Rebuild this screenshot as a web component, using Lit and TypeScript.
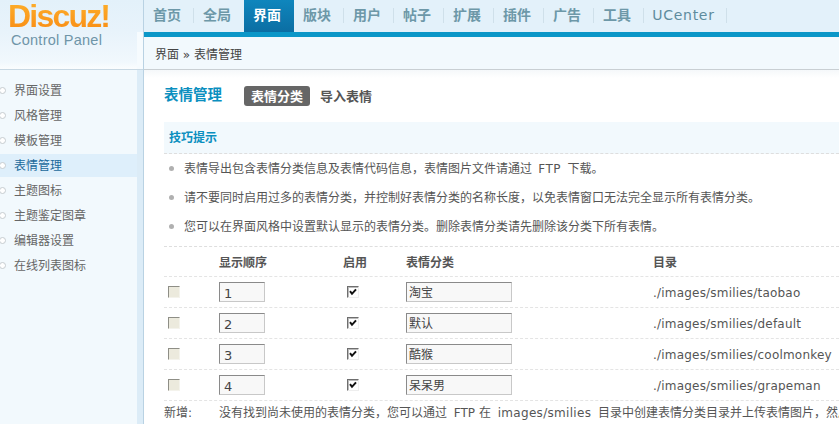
import { LitElement, html, css } from "lit";
import { customElement } from "lit/decorators.js";

const TABS = ["首页", "全局", "界面", "版块", "用户", "帖子", "扩展", "插件", "广告", "工具", "UCenter"];
const NAV = ["界面设置", "风格管理", "模板管理", "表情管理", "主题图标", "主题鉴定图章", "编辑器设置", "在线列表图标"];
const ROWS = [
  ["1", "淘宝", "./images/smilies/taobao"],
  ["2", "默认", "./images/smilies/default"],
  ["3", "酷猴", "./images/smilies/coolmonkey"],
  ["4", "呆呆男", "./images/smilies/grapeman"],
];
const TIPS = [
  html`表情导出包含表情分类信息及表情代码信息，表情图片文件请通过 <span class="lat">FTP</span> 下载。`,
  html`请不要同时启用过多的表情分类，并控制好表情分类的名称长度，以免表情窗口无法完全显示所有表情分类。`,
  html`您可以在界面风格中设置默认显示的表情分类。删除表情分类请先删除该分类下所有表情。`,
];

@customElement("app-root")
export class AppRoot extends LitElement {
  static styles = css`
    :host {
      display: grid;
      grid-template-columns: 144px 695px;
      width: 839px;
      height: 424px;
      overflow: hidden;
      background: #fff;
      font: 12px "DejaVu Sans", "Noto Sans CJK SC", sans-serif;
      color: #666;
    }
    .lat { letter-spacing: .5px; }
    .left { display: flex; flex-direction: column; background: #f2f9fd; border-right: 1px solid #b9d2e3; }
    .logo {
      height: 70px; box-sizing: border-box; display: flex;
      background: linear-gradient(#e3f1fa 0, #e8f3fb 32px, #f1f8fd 62px, #fbfdfe 69px);
      border-bottom: 1px solid #c8d8e3;
    }
    .mark { width: 137px; flex: none; padding-left: 8px; box-sizing: border-box; }
    .corner { flex: 1; margin-top: 32px; background: #f6fbfe; }
    .brand {
      font: bold 32px/32px "Liberation Sans", sans-serif;
      letter-spacing: -1.8px; height: 32px; width: 125px;
      background: linear-gradient(#fdb02c, #f98c14);
      -webkit-background-clip: text; background-clip: text; color: transparent;
    }
    .cp { font: 14.5px/16px "Liberation Sans", sans-serif; color: #6f95a8; margin-left: 3px; letter-spacing: .25px; white-space: nowrap; }
    .stripfill { flex: 1; display: flex; background: #dcecf7; }
    .navwrap { width: 137px; flex: none; background: #f2f9fd; padding-top: 8px; box-sizing: border-box; }
    .nav { display: flex; align-items: center; height: 25px; box-sizing: border-box; padding: 0 0 2px 14px; position: relative; color: #666; }
    .nav .dot {
      position: absolute; left: -1px; top: 9px; width: 5px; height: 5px;
      border: 1px solid #c6ccd0; border-radius: 50%; background: #fff;
    }
    .nav.on { background: #deeffb; color: #1b6a9c; height: 23px; margin: 1px 0; padding-bottom: 3px; }
    .nav.on .dot { top: 8px; }

    .right { display: flex; flex-direction: column; min-width: 0; }
    .tabs {
      display: flex; height: 37px; box-sizing: border-box;
      background: #e3f1fa; border-bottom: 5px solid #0b97c8;
    }
    .tab {
      width: 50px; flex: none; height: 32px; line-height: 31px; text-align: center; padding-right: 4px;
      font-size: 14px; font-weight: bold; color: #6d98a8; position: relative; box-sizing: border-box;
    }
    .tab.sep::after { content: ""; position: absolute; right: 0; top: 8px; height: 15px; width: 1px; background: #cfe0ea; }
    .tab.on { background: linear-gradient(#0f86bd, #0b6ea3); color: #fff; }
    .tab.wide { width: 83px; font-weight: normal; letter-spacing: .7px; color: #5e8c9e; }
    .crumb {
      height: 33px; box-sizing: border-box; background: #f2f9fd; border-bottom: 1px solid #c9cfd3;
      line-height: 37px; padding-left: 11px; color: #444;
    }
    .content { flex: 1; padding: 0 0 0 20px; background: linear-gradient(#f5f8fa 0, #fff 8px); min-width: 0; }
    .title { display: flex; align-items: center; height: 20px; margin-top: 16px; }
    .title h3 { margin: 0 0 6px; font-size: 14.5px; font-weight: bold; color: #0b8fbf; width: 80px; }
    .pill { background: #666; color: #fff; font-weight: bold; font-size: 13px; height: 20px; line-height: 21px; width: 66px; text-align: center; border-radius: 3px; }
    .sub { margin: 0 0 2px 10px; font-weight: bold; font-size: 13px; color: #555; }
    .tiphead {
      margin-top: 16px; height: 32px; box-sizing: border-box; background: #f2f9fd; border-bottom: 1px dashed #dedede;
      padding-left: 5px; line-height: 32px; color: #0b8fbf; font-weight: bold;
    }
    .tips { margin: 0; padding: 0; border-bottom: 1px dashed #dedede; list-style: none; height: 92px; box-sizing: border-box; }
    .tips li { display: block; height: 29px; line-height: 28px; padding-left: 20px; color: #555; white-space: nowrap; position: relative; word-spacing: 2.5px; }
    .tips li:first-child { margin-top: 1px; }
    .tips .b { position: absolute; left: 5px; top: 11px; width: 5px; height: 5px; border-radius: 50%; background: #b0b0b0; }
    .row {
      display: grid; grid-template-columns: 55px 118px 69px 247px 1fr; align-items: center;
      height: 31px; box-sizing: border-box; border-bottom: 1px dashed #e4e4e4; white-space: nowrap;
    }
    .row.head { height: 30px; font-weight: bold; color: #555; }
    .en { margin-left: 6px; }
    .gray { width: 12px; height: 12px; box-sizing: border-box; margin-left: 4px; border: 1px solid; border-color: #8e8e86 #f4f3ec #f4f3ec #8e8e86; background: #eceadd; display: block; }
    .chk { width: 12px; height: 12px; box-sizing: border-box; margin-left: 10px; border: 1px solid; border-color: #6e6e6e #eee #eee #6e6e6e; background: #fff; box-shadow: inset 1px 1px 0 #bbb; display: block; }
    .chk svg { display: block; }
    .inp { height: 20px; box-sizing: border-box; border: 1px solid; border-color: #8a8a8a #c8c8c8 #c8c8c8 #8a8a8a; background: #f8f8f8; padding: 3px 0 0 2px; color: #444; line-height: 15px; }
    .inp.n { width: 46px; padding: 3px 0 0 4px; font-size: 13px; }
    .inp.t { width: 106px; }
    .path { letter-spacing: .2px; padding-top: 2px; color: #555; }
    .foot { display: grid; grid-template-columns: 55px auto; height: 28px; line-height: 25px; white-space: nowrap; color: #555; word-spacing: 3px; }
    .foot .z { word-spacing: 0; }
    .foot .lat { letter-spacing: .3px; }
  `;

  render() {
    return html`
      <div class="left">
        <div class="logo">
          <div class="mark">
            <div class="brand">Discuz!</div>
            <div class="cp">Control Panel</div>
          </div>
          <div class="corner"></div>
        </div>
        <div class="stripfill">
          <div class="navwrap">
            ${NAV.map((n, i) => html`<div class="nav ${i === 3 ? "on" : ""}"><span class="dot"></span>${n}</div>`)}
          </div>
        </div>
      </div>
      <div class="right">
        <div class="tabs">
          ${TABS.map((t, i) => html`<div class="tab ${i === 2 ? "on" : ""} ${i !== 1 && i !== 2 ? "sep" : ""} ${t === "UCenter" ? "wide" : ""}">${t}</div>`)}
        </div>
        <div class="crumb">界面 » 表情管理</div>
        <div class="content">
          <div class="title"><h3>表情管理</h3><span class="pill">表情分类</span><span class="sub">导入表情</span></div>
          <div class="tiphead">技巧提示</div>
          <ul class="tips">${TIPS.map((t) => html`<li><span class="b"></span>${t}</li>`)}</ul>
          <div class="row head"><span></span><span>显示顺序</span><span class="en">启用</span><span>表情分类</span><span>目录</span></div>
          ${ROWS.map((r) => html`<div class="row">
            <span class="gray"></span>
            <span class="inp n">${r[0]}</span>
            <span class="chk"><svg width="10" height="10" viewBox="0 0 10 10"><path d="M2 4.2 L4 6.8 L8 2.4" fill="none" stroke="#111" stroke-width="2"/></svg></span>
            <span class="inp t">${r[1]}</span>
            <span class="path">${r[2]}</span>
          </div>`)}
          <div class="foot"><span>新增:</span><span>没有找到尚未使用的表情分类，您可以通过 <span class="z">FTP 在</span> <span class="lat">images/smilies</span> 目录中创建表情分类目录并上传表情图片，然后</span></div>
        </div>
      </div>
    `;
  }
}
